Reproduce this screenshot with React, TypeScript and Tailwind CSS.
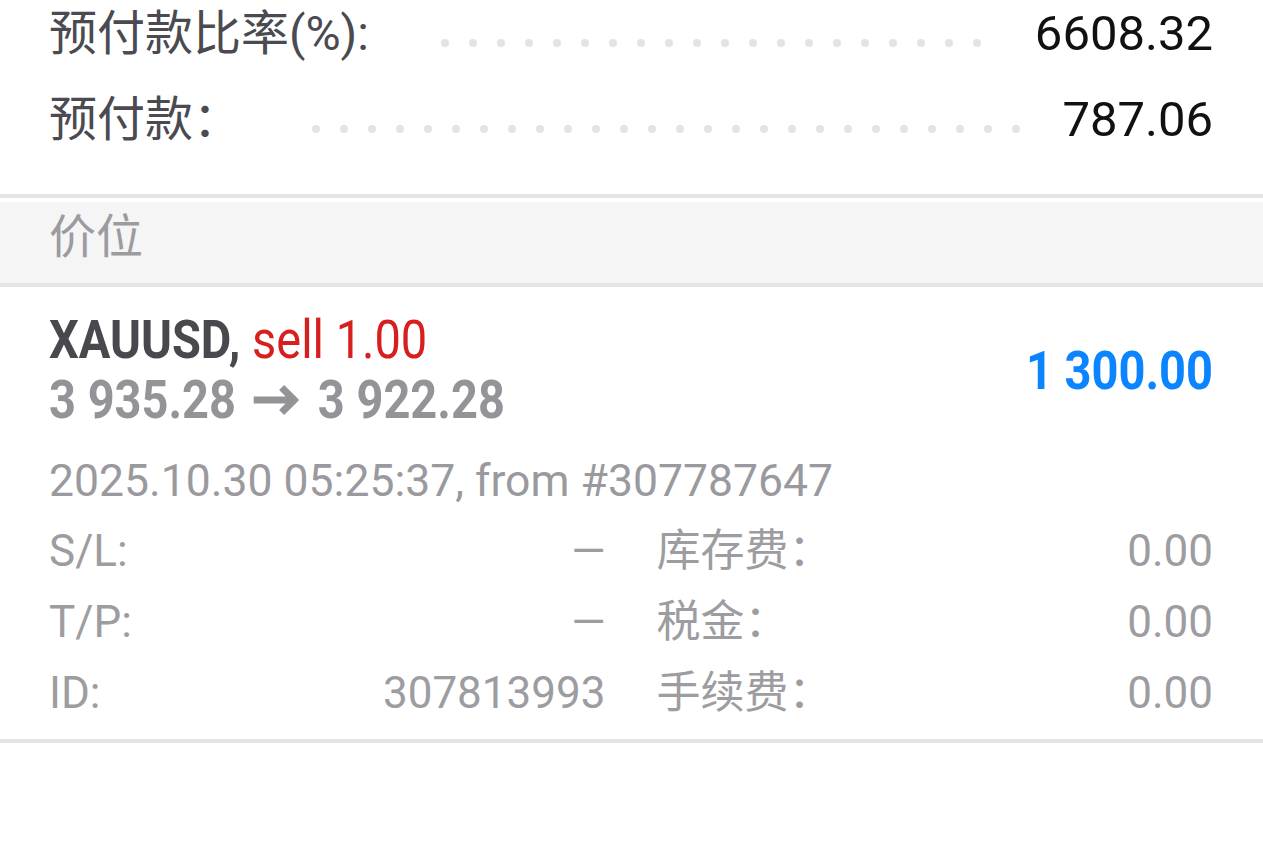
import React from "react";

const font = {
  fontFamily: 'Roboto, "Noto Sans CJK SC", sans-serif',
};

function Dots({ count, right }: { count: number; right: string }) {
  return (
    <div className={`flex flex-1 items-center justify-end gap-[20px] overflow-hidden pt-[17px] ${right}`}>
      {Array.from({ length: count }).map((_, i) => (
        <span key={i} className="h-[8px] w-[8px] shrink-0 rounded-full bg-[#e3e3e3]" />
      ))}
    </div>
  );
}

const details = [
  { l: "S/L:", v: "—", r: "库存费：", rv: "0.00" },
  { l: "T/P:", v: "—", r: "税金：", rv: "0.00" },
  { l: "ID:", v: "307813993", r: "手续费：", rv: "0.00" },
];

export default function App() {
  return (
    <div className="h-[858px] w-full overflow-hidden bg-white" style={font}>
      {/* account summary */}
      <div className="-mt-[9px] px-[49px] pb-[31px] pr-[50px] text-[48px]">
        <div className="flex h-[86px] items-center">
          <span className="text-[#4a4a50]">预付款比率(%):</span>
          <Dots count={20} right="mr-[54px]" />
          <span className="text-[49px] text-[#111111]">6608.32</span>
        </div>
        <div className="flex h-[86px] items-center">
          <span className="text-[#4a4a50]">预付款：</span>
          <Dots count={26} right="mr-[42px]" />
          <span className="text-[49px] text-[#111111]">787.06</span>
        </div>
      </div>

      {/* section header */}
      <div className="border-t-4 border-[#e4e4e4] pt-[4px]">
        <div className="flex h-[81px] items-center bg-[#f5f5f5] px-[49px] pb-[10px] text-[47px] text-[#9b9ba0]">
          价位
        </div>
      </div>

      {/* position */}
      <div className="border-y-4 border-[#e4e4e4] px-[49px] pr-[50px] pt-[23px] pb-[10px]">
        <div className="flex items-center justify-between">
          <div className="font-bold leading-[60px] text-[54px]">
            <div className="origin-left scale-x-[0.87] whitespace-nowrap">
              <span className="text-[#48484e]">XAUUSD, </span>
              <span className="font-normal text-[#d81f1f]">sell 1.00</span>
            </div>
            <div className="flex origin-left scale-x-[0.87] items-center whitespace-nowrap text-[#939398]">
              <span>3 935.28</span>
              <svg viewBox="0 0 45 32" preserveAspectRatio="none" className="ml-[20px] mr-[22px] h-[32px] w-[52px]">
                <path d="M0 16H40M28 3.5L40.5 16L28 28.5" fill="none" stroke="#939398" strokeWidth="7" />
              </svg>
              <span>3 922.28</span>
            </div>
          </div>
          <div className="origin-right scale-x-[0.87] whitespace-nowrap text-[54px] font-bold text-[#0a84ff]">
            1 300.00
          </div>
        </div>

        <div className="mt-[21px] leading-[60px] text-[44.5px] text-[#9a9a9e]">
          2025.10.30 05:25:37, from #307787647
        </div>

        <div className="mt-[5px] grid grid-cols-2 gap-x-[51px] text-[44px] leading-[71px] text-[#9d9da1]">
          {details.map((d) => (
            <React.Fragment key={d.l}>
              <div className="flex justify-between">
                <span>{d.l}</span>
                <span>{d.v}</span>
              </div>
              <div className="flex justify-between">
                <span>{d.r}</span>
                <span>{d.rv}</span>
              </div>
            </React.Fragment>
          ))}
        </div>
      </div>
    </div>
  );
}
